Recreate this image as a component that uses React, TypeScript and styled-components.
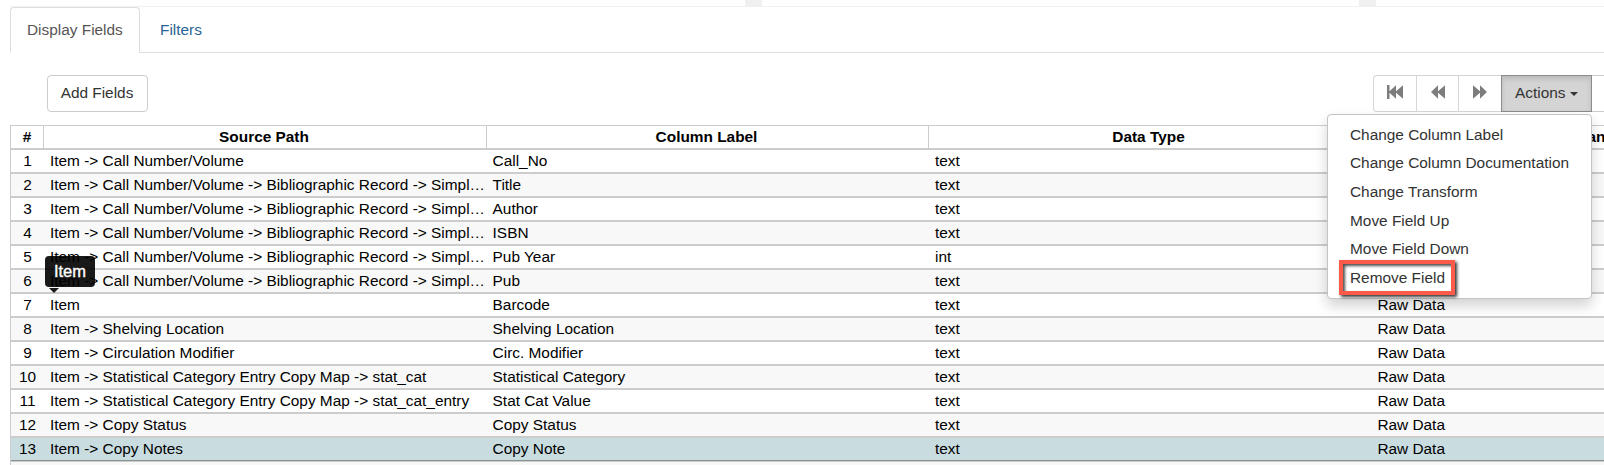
import React from 'react';
import styled, { createGlobalStyle, css } from 'styled-components';

const Global = createGlobalStyle`
  * { box-sizing: border-box; }
  html, body { margin: 0; height: 465px; overflow: hidden; background: #fff; }
  body { font-family: "Liberation Sans", Arial, sans-serif; font-size: 15.4px; color: #333; }
`;

const Page = styled.div`
  display: flex;
  flex-direction: column;
  width: 1604px;
  height: 465px;
  overflow: hidden;
`;
const TreeEdge = styled.div`
  display: grid;
  grid-template-columns: 735px 17px 597px 17px 1fr;
  height: 7px;
  margin-left: 10px;
  border-bottom: 1px solid #f2f2f2;
  flex: none;
`;
const Gutter = styled.div`
  background: #f0f0f0;
  height: 7px;
`;
const Tabs = styled.div`
  display: flex;
  height: 46px;
  margin-left: 10px;
  border-bottom: 1px solid #ddd;
  flex: none;
`;
const Tab = styled.div<{ $active?: boolean }>`
  height: 46px;
  width: ${p => (p.$active ? 130 : 76)}px;
  padding: 11px 0 0 16px;
  line-height: 22px;
  margin-right: 4px;
  white-space: nowrap;
  border: 1px solid transparent;
  border-radius: 4px 4px 0 0;
  ${p => p.$active
    ? css`color: #555; background: #fff; border-color: #ddd #ddd #fff;`
    : css`color: #2a6496; padding-left: 15px;`}
`;
const Toolbar = styled.div`
  display: flex;
  justify-content: space-between;
  height: 72px;
  padding: 22px 0 0 47px;
  flex: none;
`;
const Button = styled.button`
  width: 101px;
  height: 37px;
  padding: 0 1px 2px 0;
  font: inherit;
  color: #333;
  background: #fff;
  border: 1px solid #ccc;
  border-radius: 4px;
`;
const Group = styled.div`
  display: flex;
  width: 231px;
  height: 37px;
`;
const PageButton = styled.button<{ $w: number }>`
  display: flex;
  align-items: center;
  justify-content: center;
  width: ${p => p.$w}px;
  flex: none;
  padding: 0 0 3px;
  border: 1px solid #d6d6d6;
  border-right: 0;
  background: #fff;
  color: #7d7d7d;
  &:first-child { border-radius: 4px 0 0 4px; }
`;
const ActionsButton = styled.div`
  position: relative;
  display: flex;
  align-items: center;
  width: 91px;
  flex: none;
  padding: 0 0 2px 13px;
  border: 1px solid #8c8c8c;
  background: #d4d4d4;
  box-shadow: inset 0 3px 5px rgba(0, 0, 0, .125);
`;
const Caret = styled.span`
  margin: 2px 0 0 5px;
  border: 4px solid transparent;
  border-top-color: #333;
  border-bottom: 0;
`;
const Menu = styled.div`
  position: absolute;
  z-index: 5;
  top: 38px;
  right: -1px;
  width: 265px;
  height: 185px;
  padding: 5.85px 0;
  background: #fff;
  border: 1px solid #c4c4c4;
  border-radius: 4px;
  box-shadow: 0 7px 13px rgba(0, 0, 0, .175);
`;
const MenuItem = styled.div`
  height: 28.6px;
  line-height: 28px;
  padding-left: 22px;
  white-space: nowrap;
`;
const Marked = styled.div`
  position: absolute;
  left: 11px;
  top: 145px;
  width: 116px;
  height: 35px;
  border: 4px solid #fc5b4b;
  box-shadow: 2px 2px 3px rgba(0, 0, 0, .8), inset 2px 2px 3px rgba(0, 0, 0, .7);
`;
const Next = styled.div`
  flex: 1;
  border-top: 1px solid #ccc;
  border-bottom: 1px solid #ccc;
`;
const Grid = styled.div`
  flex: none;
  margin-left: 10px;
  border: 1px solid #ccc;
  border-right: 0;
  border-bottom: 0;
  color: #000;
`;
const Header = styled.div`
  display: grid;
  grid-template-columns: 32px 443px 442px 442px 442px;
  height: 24px;
  border-bottom: 2px solid #ccc;
  font-weight: bold;
  text-align: center;
  line-height: 22px;
`;
const HeaderCell = styled.div`
  padding-right: 2px;
  & + & { border-left: 1px solid #ccc; }
  &:first-child { padding-right: 0; }
`;
const Row = styled.div<{ $shade?: boolean; $selected?: boolean }>`
  display: grid;
  grid-template-columns: 33px 442.6px 442.4px 442.4px 442.4px;
  height: 24px;
  line-height: 22px;
  border-bottom: 2px solid #ccc;
  background: ${p => (p.$selected ? '#c9dde1' : p.$shade ? '#f8f8f8' : '#fff')};
  ${p => p.$selected && css`box-shadow: inset 0 -1px #8a9294; border-bottom-width: 1px;`}
`;
const Cell = styled.div`
  position: relative;
  min-width: 0;
  padding-left: 6px;
  white-space: nowrap;
`;
const Num = styled(Cell)`
  padding: 0;
  text-align: center;
`;
const Tooltip = styled.div`
  position: absolute;
  z-index: 3;
  left: 1px;
  top: -38px;
  width: 50px;
  height: 31px;
  border-radius: 4px;
  background: rgba(0, 0, 0, .9);
  color: #fff;
  font-size: 16.5px;
  -webkit-text-stroke: .35px #fff;
  line-height: 31px;
  text-align: center;
  &::after {
    content: "";
    position: absolute;
    left: 4px;
    top: 32px;
    border: 5px solid transparent;
    border-top-color: #1a1a1a;
    border-bottom: 0;
  }
`;

const bib = 'Item -> Call Number/Volume -> Bibliographic Record -> Simpl…';
const rows: string[][] = [
  ['Item -> Call Number/Volume', 'Call_No', 'text'],
  [bib, 'Title', 'text'],
  [bib, 'Author', 'text'],
  [bib, 'ISBN', 'text'],
  [bib, 'Pub Year', 'int'],
  [bib, 'Pub', 'text'],
  ['Item', 'Barcode', 'text'],
  ['Item -> Shelving Location', 'Shelving Location', 'text'],
  ['Item -> Circulation Modifier', 'Circ. Modifier', 'text'],
  ['Item -> Statistical Category Entry Copy Map -> stat_cat', 'Statistical Category', 'text'],
  ['Item -> Statistical Category Entry Copy Map -> stat_cat_entry', 'Stat Cat Value', 'text'],
  ['Item -> Copy Status', 'Copy Status', 'text'],
  ['Item -> Copy Notes', 'Copy Note', 'text'],
];
const menu = ['Change Column Label', 'Change Column Documentation', 'Change Transform', 'Move Field Up', 'Move Field Down', 'Remove Field'];

const First = () => (
  <svg width="16" height="14" viewBox="0 0 16 14" fill="currentColor">
    <path d="M0 0h2.5v6.3L9 .3v6L16 .3v13.4L9 7.7v6L2.5 7.7V14H0z" />
  </svg>
);
const Back = () => (
  <svg width="14" height="14" viewBox="0 0 14 14" fill="currentColor">
    <path d="M0 7L7 .3v6L14 .3v13.4L7 7.7v6z" />
  </svg>
);
const Forward = () => (
  <svg width="14" height="14" viewBox="0 0 14 14" fill="currentColor">
    <path d="M14 7L7 .3v6L0 .3v13.4L7 7.7v6z" />
  </svg>
);

export default function App() {
  return (
    <Page>
      <Global />
      <TreeEdge><span /><Gutter /><span /><Gutter /></TreeEdge>
      <Tabs>
        <Tab $active>Display Fields</Tab>
        <Tab>Filters</Tab>
      </Tabs>
      <Toolbar>
        <Button>Add Fields</Button>
        <Group>
          <PageButton $w={43}><First /></PageButton>
          <PageButton $w={42}><Back /></PageButton>
          <PageButton $w={43}><Forward /></PageButton>
          <ActionsButton>
            Actions<Caret />
            <Menu>
              {menu.map(m => <MenuItem key={m}>{m}</MenuItem>)}
              <Marked />
            </Menu>
          </ActionsButton>
          <Next />
        </Group>
      </Toolbar>
      <Grid>
        <Header>
          {['#', 'Source Path', 'Column Label', 'Data Type', 'Field Transform'].map(h => <HeaderCell key={h}>{h}</HeaderCell>)}
        </Header>
        {rows.map(([path, label, type], i) => (
          <Row key={i} $shade={i % 2 === 1} $selected={i === 12}>
            <Num>{i + 1}</Num>
            <Cell>{path}{i === 6 && <Tooltip>Item</Tooltip>}</Cell>
            <Cell>{label}</Cell>
            <Cell>{type}</Cell>
            <Cell>{i > 5 && 'Raw Data'}</Cell>
          </Row>
        ))}
        <Row $shade />
      </Grid>
    </Page>
  );
}
